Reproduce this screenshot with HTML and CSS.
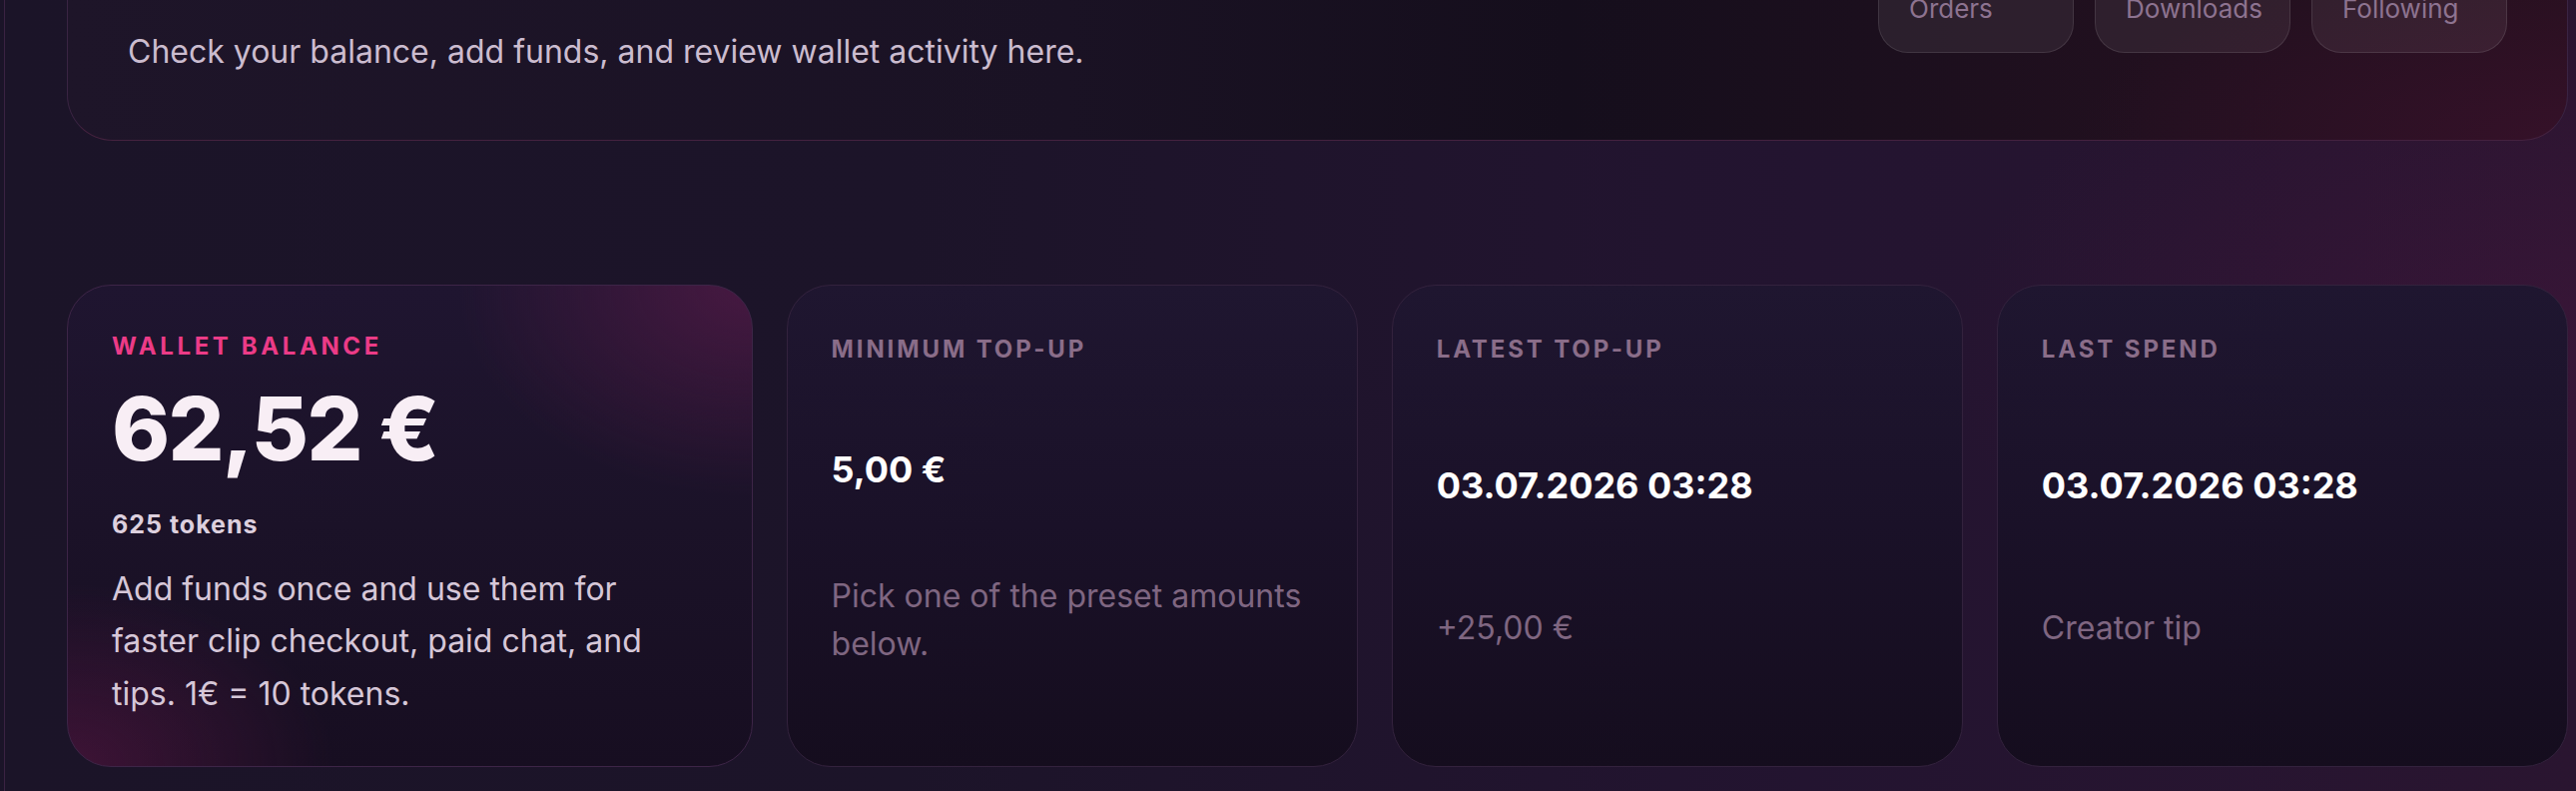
FILE: index.html
```html
<!DOCTYPE html>
<html lang="en">
<head>
<meta charset="utf-8">
<title>Wallet</title>
<link rel="stylesheet" href="styles.css">
</head>
<body>
<div class="shell">
  <aside class="rail"></aside>
  <main class="main">
    <section class="hero">
      <div class="hero-text">
        <p class="hero-sub">Check your balance, add funds, and review wallet activity here.</p>
      </div>
      <nav class="hero-links">
        <a class="pill">Orders</a>
        <a class="pill">Downloads</a>
        <a class="pill">Following</a>
      </nav>
    </section>

    <section class="stats">
      <article class="card card-wallet">
        <div class="wallet-label">Wallet balance</div>
        <div class="wallet-amount">62,52 €</div>
        <div class="wallet-tokens">625 tokens</div>
        <p class="wallet-note">Add funds once and use them for faster clip checkout, paid chat, and tips. 1€ = 10 tokens.</p>
      </article>

      <article class="card card-stat">
        <div class="stat-label">Minimum top-up</div>
        <div class="stat-body">
          <div class="stat-value">5,00 €</div>
          <p class="stat-sub">Pick one of the preset amounts below.</p>
        </div>
      </article>

      <article class="card card-stat">
        <div class="stat-label">Latest top-up</div>
        <div class="stat-body">
          <div class="stat-value">03.07.2026 03:28</div>
          <p class="stat-sub">+25,00 €</p>
        </div>
      </article>

      <article class="card card-stat">
        <div class="stat-label">Last spend</div>
        <div class="stat-body">
          <div class="stat-value">03.07.2026 03:28</div>
          <p class="stat-sub">Creator tip</p>
        </div>
      </article>
    </section>
  </main>
</div>
</body>
</html>
```

FILE: styles.css
```css
* {
  box-sizing: border-box;
}

html, body {
  margin: 0;
  height: 100%;
}

body {
  font-family: Inter, "Noto Sans", "Liberation Sans", sans-serif;
  color: #f4eaf2;
  background:
    radial-gradient(ellipse 900px 500px at 100% 45%, rgba(70, 22, 62, 0.5), rgba(70, 22, 62, 0) 70%),
    linear-gradient(90deg, #1b1428 0%, #1c1429 35%, #231430 70%, #2a1530 100%);
  overflow: hidden;
}

.shell {
  display: flex;
  min-height: 100%;
}

.rail {
  flex: 0 0 5px;
  border-right: 1px solid #3a2242;
}

.main {
  flex: 1;
  padding: 0 8px 0 62px;
}

/* ---------- hero ---------- */
.hero {
  margin-top: -97px;
  display: flex;
  align-items: flex-end;
  justify-content: space-between;
  padding: 60px 60px 66px 60px;
  border: 1px solid #3a2443;
  border-bottom-color: #44223f;
  border-radius: 46px;
  background:
    radial-gradient(ellipse 700px 260px at 100% 100%, rgba(70, 18, 52, 0.45), rgba(70, 18, 52, 0) 70%),
    linear-gradient(90deg, #1e1529 0%, #1a1224 40%, #150e1c 60%, #22101f 85%, #27101f 100%);
}

.hero-sub {
  margin: 0;
  font-size: 32px;
  line-height: 45px;
  color: #cbbccf;
}

.hero-links {
  display: flex;
  gap: 21px;
  margin-bottom: 21px;
}

.pill {
  width: 196px;
  padding: 24px 30px;
  font-size: 26px;
  line-height: 39px;
  color: #8d7390;
  text-decoration: none;
  border: 1px solid rgba(255, 255, 255, 0.1);
  border-radius: 30px;
  background: rgba(255, 255, 255, 0.065);
}

/* ---------- stats ---------- */
.stats {
  margin-top: 144px;
  display: grid;
  grid-template-columns: 1.2fr 1fr 1fr 1fr;
  gap: 34px;
}

.card {
  border-radius: 44px;
  border: 1px solid #33223d;
  padding: 46px 44px;
  background: linear-gradient(180deg, #1f1630 0%, #1a1128 50%, #150d1e 100%);
}

.card-wallet {
  border-color: #3d2547;
  background:
    radial-gradient(ellipse 420px 300px at 100% 0%, rgba(110, 28, 82, 0.5), rgba(110, 28, 82, 0) 70%),
    radial-gradient(ellipse 380px 260px at 0% 100%, rgba(100, 24, 74, 0.5), rgba(100, 24, 74, 0) 70%),
    linear-gradient(180deg, #1f1530 0%, #1b1228 50%, #170e21 100%);
}

.wallet-label {
  font-size: 24px;
  line-height: 30px;
  font-weight: 700;
  letter-spacing: 0.15em;
  text-transform: uppercase;
  color: #ec3b87;
}

.wallet-amount {
  margin-top: 19px;
  font-size: 88px;
  line-height: 1.1;
  font-weight: 800;
  letter-spacing: -0.02em;
  color: #f8eef5;
}

.wallet-tokens {
  margin-top: 30px;
  font-size: 25px;
  line-height: 34px;
  font-weight: 700;
  letter-spacing: 0.04em;
  color: #ddd0de;
}

.wallet-note {
  max-width: 560px;
  margin: 22px 0 0;
  font-size: 32px;
  line-height: 52.5px;
  color: #d6c7d8;
}

.card-stat {
  display: flex;
  flex-direction: column;
  padding-bottom: 17px;
}

.stat-label {
  font-size: 24px;
  line-height: 36px;
  font-weight: 700;
  letter-spacing: 0.12em;
  text-transform: uppercase;
  color: #8a6d89;
}

.stat-body {
  flex: 1;
  display: flex;
  flex-direction: column;
  justify-content: space-evenly;
}

.stat-value {
  font-size: 36px;
  line-height: 1.2;
  font-weight: 700;
  color: #ffffff;
}

.stat-sub {
  margin: 0;
  font-size: 32px;
  line-height: 48px;
  color: #7f6681;
}
```
